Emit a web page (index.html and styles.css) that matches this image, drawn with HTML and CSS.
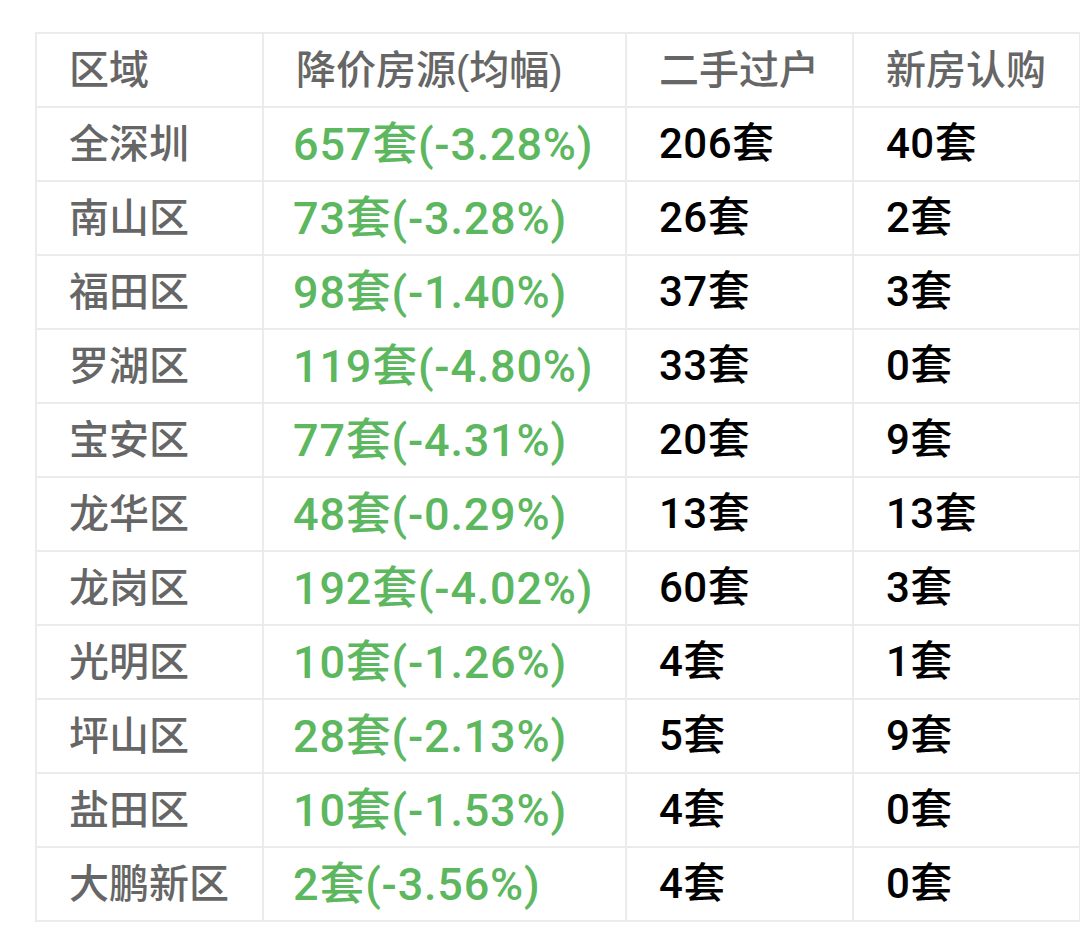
FILE: index.html
```html
<!DOCTYPE html>
<html lang="zh-CN">
<head>
<meta charset="utf-8">
<title>深圳降价房源</title>
<link rel="stylesheet" href="styles.css">
</head>
<body>
<div class="wrap">
<table class="data">
  <colgroup>
    <col class="c1"><col class="c2"><col class="c3"><col class="c4">
  </colgroup>
  <thead>
    <tr><th>区域</th><th>降价房源(均幅)</th><th>二手过户</th><th>新房认购</th></tr>
  </thead>
  <tbody>
    <tr><td class="area">全深圳</td><td class="down">657套(-3.28%)</td><td class="num">206套</td><td class="num">40套</td></tr>
    <tr><td class="area">南山区</td><td class="down">73套(-3.28%)</td><td class="num">26套</td><td class="num">2套</td></tr>
    <tr><td class="area">福田区</td><td class="down">98套(-1.40%)</td><td class="num">37套</td><td class="num">3套</td></tr>
    <tr><td class="area">罗湖区</td><td class="down">119套(-4.80%)</td><td class="num">33套</td><td class="num">0套</td></tr>
    <tr><td class="area">宝安区</td><td class="down">77套(-4.31%)</td><td class="num">20套</td><td class="num">9套</td></tr>
    <tr><td class="area">龙华区</td><td class="down">48套(-0.29%)</td><td class="num">13套</td><td class="num">13套</td></tr>
    <tr><td class="area">龙岗区</td><td class="down">192套(-4.02%)</td><td class="num">60套</td><td class="num">3套</td></tr>
    <tr><td class="area">光明区</td><td class="down">10套(-1.26%)</td><td class="num">4套</td><td class="num">1套</td></tr>
    <tr><td class="area">坪山区</td><td class="down">28套(-2.13%)</td><td class="num">5套</td><td class="num">9套</td></tr>
    <tr><td class="area">盐田区</td><td class="down">10套(-1.53%)</td><td class="num">4套</td><td class="num">0套</td></tr>
    <tr><td class="area">大鹏新区</td><td class="down">2套(-3.56%)</td><td class="num">4套</td><td class="num">0套</td></tr>
  </tbody>
</table>
</div>
</body>
</html>
```

FILE: styles.css
```css
html, body {
  margin: 0;
  padding: 0;
  background: #ffffff;
  overflow: hidden;
}

.wrap {
  padding: 32px 0 0 35px;
}

.data {
  border-collapse: collapse;
  table-layout: fixed;
  width: 1044px;
  font-family: "Liberation Sans", "Noto Sans CJK SC", sans-serif;
  font-size: 40px;
}

.c1 { width: 227px; }
.c2 { width: 363px; }
.c3 { width: 227px; }
.c4 { width: 227px; }

.data th,
.data td {
  border: 2px solid #ebebeb;
  height: 72px;
  padding: 0 0 0 32px;
  text-align: left;
  vertical-align: middle;
  white-space: nowrap;
  line-height: 1;
}

.data th {
  color: #666666;
  font-weight: 500;
}

.data td.area {
  color: #666666;
  font-weight: 500;
}

.data td.down {
  color: #5cb75f;
  font-family: "Roboto", "Noto Sans CJK SC", sans-serif;
  font-size: 45px;
  font-weight: 500;
  letter-spacing: 0.8px;
  padding-left: 29px;
}

.data td.num {
  color: #000000;
  font-family: "Roboto", "Noto Sans CJK SC", sans-serif;
  font-size: 42px;
  font-weight: 500;
  letter-spacing: 0.5px;
}
```
